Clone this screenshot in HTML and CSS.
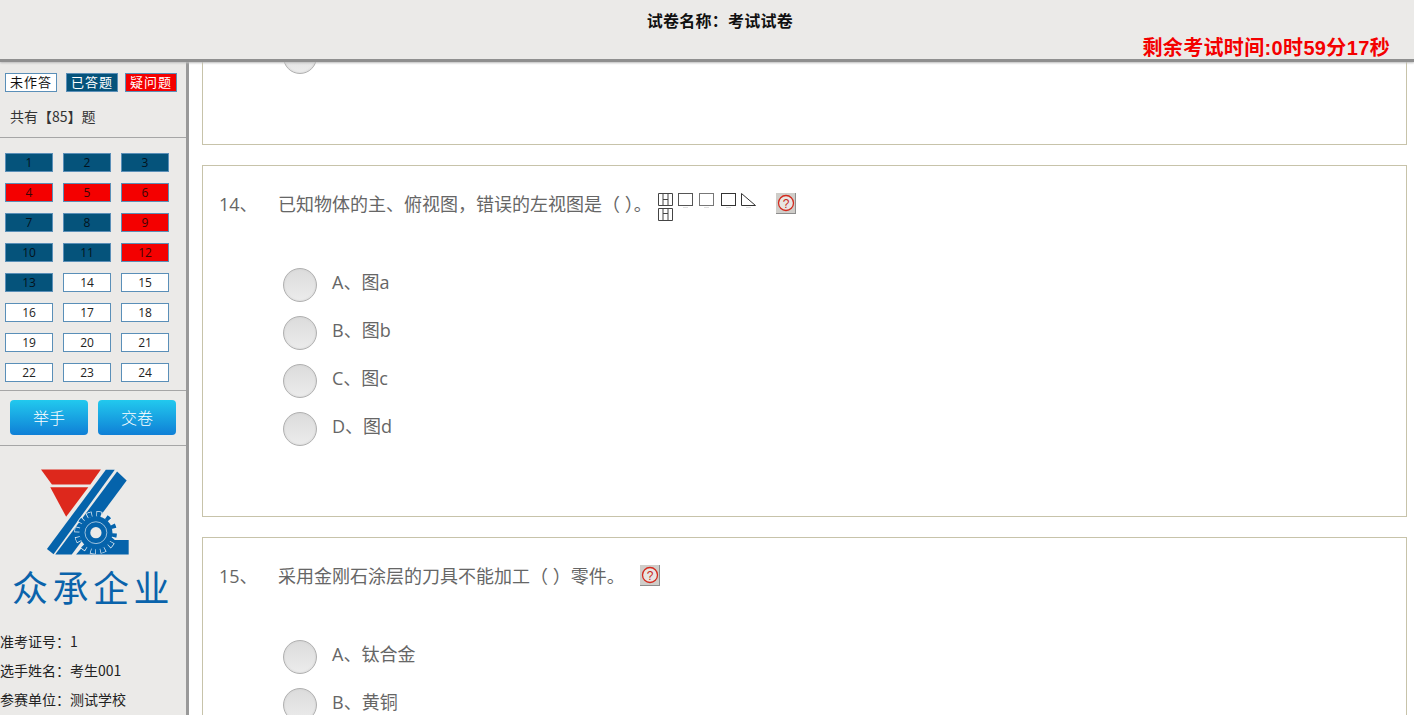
FILE: index.html
```html
<!DOCTYPE html>
<html lang="zh">
<head>
<meta charset="utf-8">
<title>考试试卷</title>
<link rel="stylesheet" href="styles.css">
</head>
<body>
<div class="page">
  <header class="top">
    <div class="title">试卷名称：考试试卷</div>
    <div class="timer">剩余考试时间:0时59分17秒</div>
  </header>
  <div class="body">
    <aside class="side">
      <div class="legend">
        <span class="tag">未作答</span>
        <span class="tag done">已答题</span>
        <span class="tag doubt">疑问题</span>
      </div>
      <div class="total">共有【85】题</div>
      <div class="nums">
        <span class="num done">1</span><span class="num done">2</span><span class="num done">3</span>
        <span class="num doubt">4</span><span class="num doubt">5</span><span class="num doubt">6</span>
        <span class="num done">7</span><span class="num done">8</span><span class="num doubt">9</span>
        <span class="num done">10</span><span class="num done">11</span><span class="num doubt">12</span>
        <span class="num done">13</span><span class="num">14</span><span class="num">15</span>
        <span class="num">16</span><span class="num">17</span><span class="num">18</span>
        <span class="num">19</span><span class="num">20</span><span class="num">21</span>
        <span class="num">22</span><span class="num">23</span><span class="num">24</span>
      </div>
      <div class="actions">
        <button class="btn">举手</button>
        <button class="btn">交卷</button>
      </div>
      <div class="logo">
        <svg class="logo-mark" width="88" height="87" viewBox="122 27 266 260">
          <polygon points="122,27 303,27 271,72 155,72" fill="#dd281c"/>
          <polygon points="150,81 265,81 198,170" fill="#dd281c"/>
          <polygon points="140,267 318,28 345,28 160,283" fill="#0563ab"/>
          <polygon points="165,284 352,33 381,60 215,284" fill="#0563ab"/>
          <polygon points="228,284 300,200 345,240 387,240 387,284" fill="#0563ab"/>
          <circle cx="288" cy="218" r="56" fill="none" stroke="#e9f0f5" stroke-width="19" stroke-dasharray="16 13.3"/>
          <circle cx="288" cy="218" r="56" fill="none" stroke="#0563ab" stroke-width="15" stroke-dasharray="12 17.3" stroke-dashoffset="-2"/>
          <circle cx="288" cy="218" r="50" fill="#0563ab"/>
          <circle cx="288" cy="218" r="33" fill="none" stroke="#e9f0f5" stroke-width="2"/>
          <circle cx="288" cy="218" r="17" fill="#ebeae8"/>
        </svg>
        <div class="logo-text">众承企业</div>
      </div>
      <div class="info">
        <div>准考证号：1</div>
        <div>选手姓名：考生001</div>
        <div>参赛单位：测试学校</div>
      </div>
    </aside>
    <main class="main">
      <section class="card cut">
        <ul class="opts"><li><span class="radio"></span></li></ul>
      </section>
      <section class="card tall">
        <div class="q">
          <span class="no">14、</span>
          <span class="qt">已知物体的主、俯视图，错误的左视图是（ ）。</span>
          <span class="figs">
            <svg width="20" height="28" viewBox="0 0 20 28"><path d="M.5.5h14v12H.5zM5 .5v12M10 .5v12M5 6.5h5M.5 15.5h14v12H.5zM5 15.5v12M10 15.5v12M5 20.5h5" fill="none" stroke="#444"/></svg>
            <svg width="21" height="16" viewBox="0 0 21 16"><rect x=".5" y=".5" width="14" height="12" fill="#fff" stroke="#555"/><path d="M5 14.5h5" stroke="#ddd"/></svg>
            <svg width="22" height="16" viewBox="0 0 22 16"><rect x=".5" y=".5" width="14" height="12" fill="#fff" stroke="#777"/><path d="M5 14.5h5" stroke="#ddd"/></svg>
            <svg width="20" height="16" viewBox="0 0 20 16"><rect x=".5" y=".5" width="14" height="12" fill="#fff" stroke="#333"/><path d="M5 14.5h5" stroke="#ddd"/></svg>
            <svg width="15" height="16" viewBox="0 0 15 16"><path d="M.5.5V12.5h14z" fill="#fff" stroke="#333"/><path d="M5 14.5h5" stroke="#ddd"/></svg>
          </span>
          <span class="help first"><svg width="20" height="20" viewBox="0 0 20 20"><circle cx="10" cy="10" r="7.5" fill="#e8e6e3" stroke="#d42a1e" stroke-width="1.3"/><text x="10" y="14.5" class="help-q">?</text></svg></span>
        </div>
        <ul class="opts">
          <li><span class="radio"></span><span class="txt">A、图a</span></li>
          <li><span class="radio"></span><span class="txt">B、图b</span></li>
          <li><span class="radio"></span><span class="txt">C、图c</span></li>
          <li><span class="radio"></span><span class="txt">D、图d</span></li>
        </ul>
      </section>
      <section class="card tall">
        <div class="q">
          <span class="no">15、</span>
          <span class="qt">采用金刚石涂层的刀具不能加工（ ）零件。</span>
          <span class="help second"><svg width="20" height="20" viewBox="0 0 20 20"><circle cx="10" cy="10" r="7.5" fill="#e8e6e3" stroke="#d42a1e" stroke-width="1.3"/><text x="10" y="14.5" class="help-q">?</text></svg></span>
        </div>
        <ul class="opts">
          <li><span class="radio"></span><span class="txt">A、钛合金</span></li>
          <li><span class="radio"></span><span class="txt">B、黄铜</span></li>
        </ul>
      </section>
    </main>
  </div>
</div>
</body>
</html>
```
FILE: styles.css
```css
* { box-sizing: border-box; }
html, body { margin: 0; height: 100%; overflow: hidden; background: #fff; }
body { font-family: "Open Sans", "Noto Sans CJK SC", sans-serif; }
.page { height: 715px; display: flex; flex-direction: column; }
.top {
  height: 62px; flex: none; background: #ebeae8;
  border-bottom: 3px solid #8f8f8f;
  box-shadow: 0 1px 2px #bbb;
  display: flex; flex-direction: column; position: relative; z-index: 2;
}
.title {
  font: 700 16px/20px "Noto Sans CJK SC", sans-serif; color: #111; letter-spacing: .25px;
  text-align: center; padding: 10px 0 0 26px;
}
.timer {
  font: 700 20px/26px "Liberation Sans", "Noto Sans CJK SC", sans-serif; color: #f40000;
  text-align: right; padding: 5px 24px 0 0; letter-spacing: .35px;
}
.body { flex: 1; display: flex; min-height: 0; }
.side {
  width: 189px; flex: none; background: #ebeae8;
  border-right: 3px solid #999; overflow: hidden;
  font: 13px/19px "Noto Sans CJK SC", sans-serif; color: #222;
}
.legend { display: flex; padding: 11px 0 0 5px; }
.tag {
  width: 52px; height: 19px; background: #fff; border: 1px solid #5a8fb8;
  text-align: center; font-size: 13px; line-height: 15px; color: #111; letter-spacing: 1px;
  margin-right: 9px;
}
.tag.done { background: #05537b; color: #fff; margin-right: 7px; }
.tag.doubt { background: #f40000; color: #fff; margin-right: 0; }
.total {
  height: 46px; padding: 14px 0 0 10px; font-size: 14px; line-height: 20px; color: #333;
  border-bottom: 1px solid #a6a6a6;
}
.nums {
  display: grid; grid-template-columns: repeat(3, 48px); column-gap: 10px; row-gap: 11px;
  padding: 15px 0 8px 5px; border-bottom: 1px solid #a6a6a6;
}
.num {
  height: 19px; border: 1px solid #5a8fb8; background: #fff;
  text-align: center; font: 12px/17px "Open Sans", sans-serif; color: #222;
}
.num.done { background: #05537b; color: #04121c; }
.num.doubt { background: #f40000; color: #3a0505; }
.actions {
  display: flex; gap: 10px; padding: 9px 0 10px 10px; border-bottom: 1px solid #a6a6a6;
}
.btn {
  width: 78px; height: 35px; border: 0; border-radius: 4px; padding: 0;
  background: linear-gradient(#22c9ee, #0f7fd6); color: #fff;
  font: 300 16px/33px "Noto Sans CJK SC", sans-serif;
}
.logo { display: flex; flex-direction: column; align-items: flex-start; padding: 23px 0 0 41px; }
.logo-mark { display: block; }
.logo-text {
  font: 400 36px/42px "Noto Sans CJK SC", sans-serif; color: #0a63ab; letter-spacing: 4.5px;
  margin: 9px 0 0 -29px; white-space: nowrap;
}
.info { padding-top: 20px; font-size: 14px; line-height: 29px; color: #222; white-space: nowrap; }
.main { flex: 1; min-width: 0; overflow: hidden; padding: 0 7px 0 13px; }
.card { background: #fff; border: 1px solid #c7c3aa; margin-bottom: 20px; }
.card.cut { display: flow-root; height: 100px; margin-top: -17px; border-top: 0; }
.card.cut .opts { padding-top: 0; margin-top: -12px; }
.card.tall { height: 352px; }
.q {
  display: flex; align-items: flex-start; height: 62px; padding: 27px 0 0 16px;
  font-size: 18px; line-height: 22px; color: #666;
}
.no { width: 59px; flex: none; }
.qt { white-space: nowrap; }
.figs { display: flex; margin: 0 0 0 6px; align-items: flex-start; flex: none; }
.figs svg { display: block; flex: none; }
.help {
  width: 20px; height: 21px; background: #cfcdc9; display: block; flex: none;
  box-shadow: inset -1px -1px 0 #8e8e8e;
}
.help svg { display: block; }
.help.first { margin-left: 20px; }
.help.second { margin-left: 15px; }
.help-q { font: 400 12px "Liberation Sans", sans-serif; fill: #c9261a; text-anchor: middle; }
.opts { list-style: none; margin: 0; padding: 33px 0 0 80px; }
.opts li {
  height: 48px; display: flex; align-items: center; gap: 15px;
  font-size: 18px; color: #666;
}
.txt { margin-top: -8px; }
.radio {
  width: 34px; height: 34px; border-radius: 50%; flex: none;
  background: linear-gradient(#dcdcdc, #ececec); border: 1px solid #b0b0b0;
  box-shadow: inset 0 0 2px #ccc;
}
```
